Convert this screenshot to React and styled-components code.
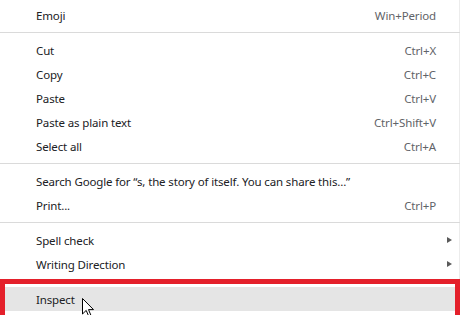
import styled, { createGlobalStyle } from 'styled-components';

const GlobalStyle = createGlobalStyle`
  html, body {
    margin: 0;
    padding: 0;
    background: #ffffff;
  }
  body {
    font-family: "Noto Sans", "Open Sans", sans-serif;
    overflow: hidden;
  }
`;

const Menu = styled.div`
  position: relative;
  width: 460px;
  height: 315px;
  box-sizing: border-box;
  padding-top: 3px;
  box-shadow: inset -1px 0 0 #ececec;
  overflow: hidden;
`;

const Item = styled.div`
  display: flex;
  align-items: center;
  justify-content: space-between;
  height: 24px;
  padding: 0 24px 0 36px;
  font-size: 11.5px;
  letter-spacing: -0.14px;
  color: #202124;
  background: ${(p) => (p.$active ? '#e5e5e5' : 'transparent')};
  white-space: nowrap;
`;

const Shortcut = styled.span`
  color: #5f6368;
`;

const Arrow = styled.span`
  width: 0;
  height: 0;
  margin-right: -16px;
  border-top: 3.5px solid transparent;
  border-bottom: 3.5px solid transparent;
  border-left: 5px solid #5a5a5a;
`;

const Separator = styled.div`
  height: 1px;
  margin: 5px 0;
  background: #dadada;
`;

const Highlight = styled.div`
  position: absolute;
  left: 0;
  top: 279px;
  width: 460px;
  height: 54px;
  box-sizing: border-box;
  border: 5px solid #e4202b;
  pointer-events: none;
`;

const Cursor = styled.svg`
  position: absolute;
  left: 82px;
  top: 298px;
`;

const groups = [
  [{ label: 'Emoji', shortcut: 'Win+Period' }],
  [
    { label: 'Cut', shortcut: 'Ctrl+X' },
    { label: 'Copy', shortcut: 'Ctrl+C' },
    { label: 'Paste', shortcut: 'Ctrl+V' },
    { label: 'Paste as plain text', shortcut: 'Ctrl+Shift+V' },
    { label: 'Select all', shortcut: 'Ctrl+A' },
  ],
  [
    { label: 'Search Google for \u201cs, the story of itself. You can share this...\u201d' },
    { label: 'Print...', shortcut: 'Ctrl+P' },
  ],
  [
    { label: 'Spell check', submenu: true },
    { label: 'Writing Direction', submenu: true },
  ],
  [{ label: 'Inspect', active: true }],
];

export default function App() {
  return (
    <>
      <GlobalStyle />
      <Menu>
        {groups.map((group, gi) => (
          <div key={gi}>
            {gi > 0 && <Separator />}
            {group.map((item) => (
              <Item key={item.label} $active={item.active}>
                <span>{item.label}</span>
                {item.shortcut && <Shortcut>{item.shortcut}</Shortcut>}
                {item.submenu && <Arrow />}
              </Item>
            ))}
          </div>
        ))}
        <Highlight />
        <Cursor width="13" height="20" viewBox="0 0 13 20">
          <path
            d="M0.5 0.5 L0.5 16 L4.2 12.4 L6.8 18.5 L9 17.5 L6.5 11.6 L11.5 11.6 Z"
            fill="#ffffff"
            stroke="#000000"
            strokeWidth="1"
            strokeLinejoin="round"
          />
        </Cursor>
      </Menu>
    </>
  );
}
